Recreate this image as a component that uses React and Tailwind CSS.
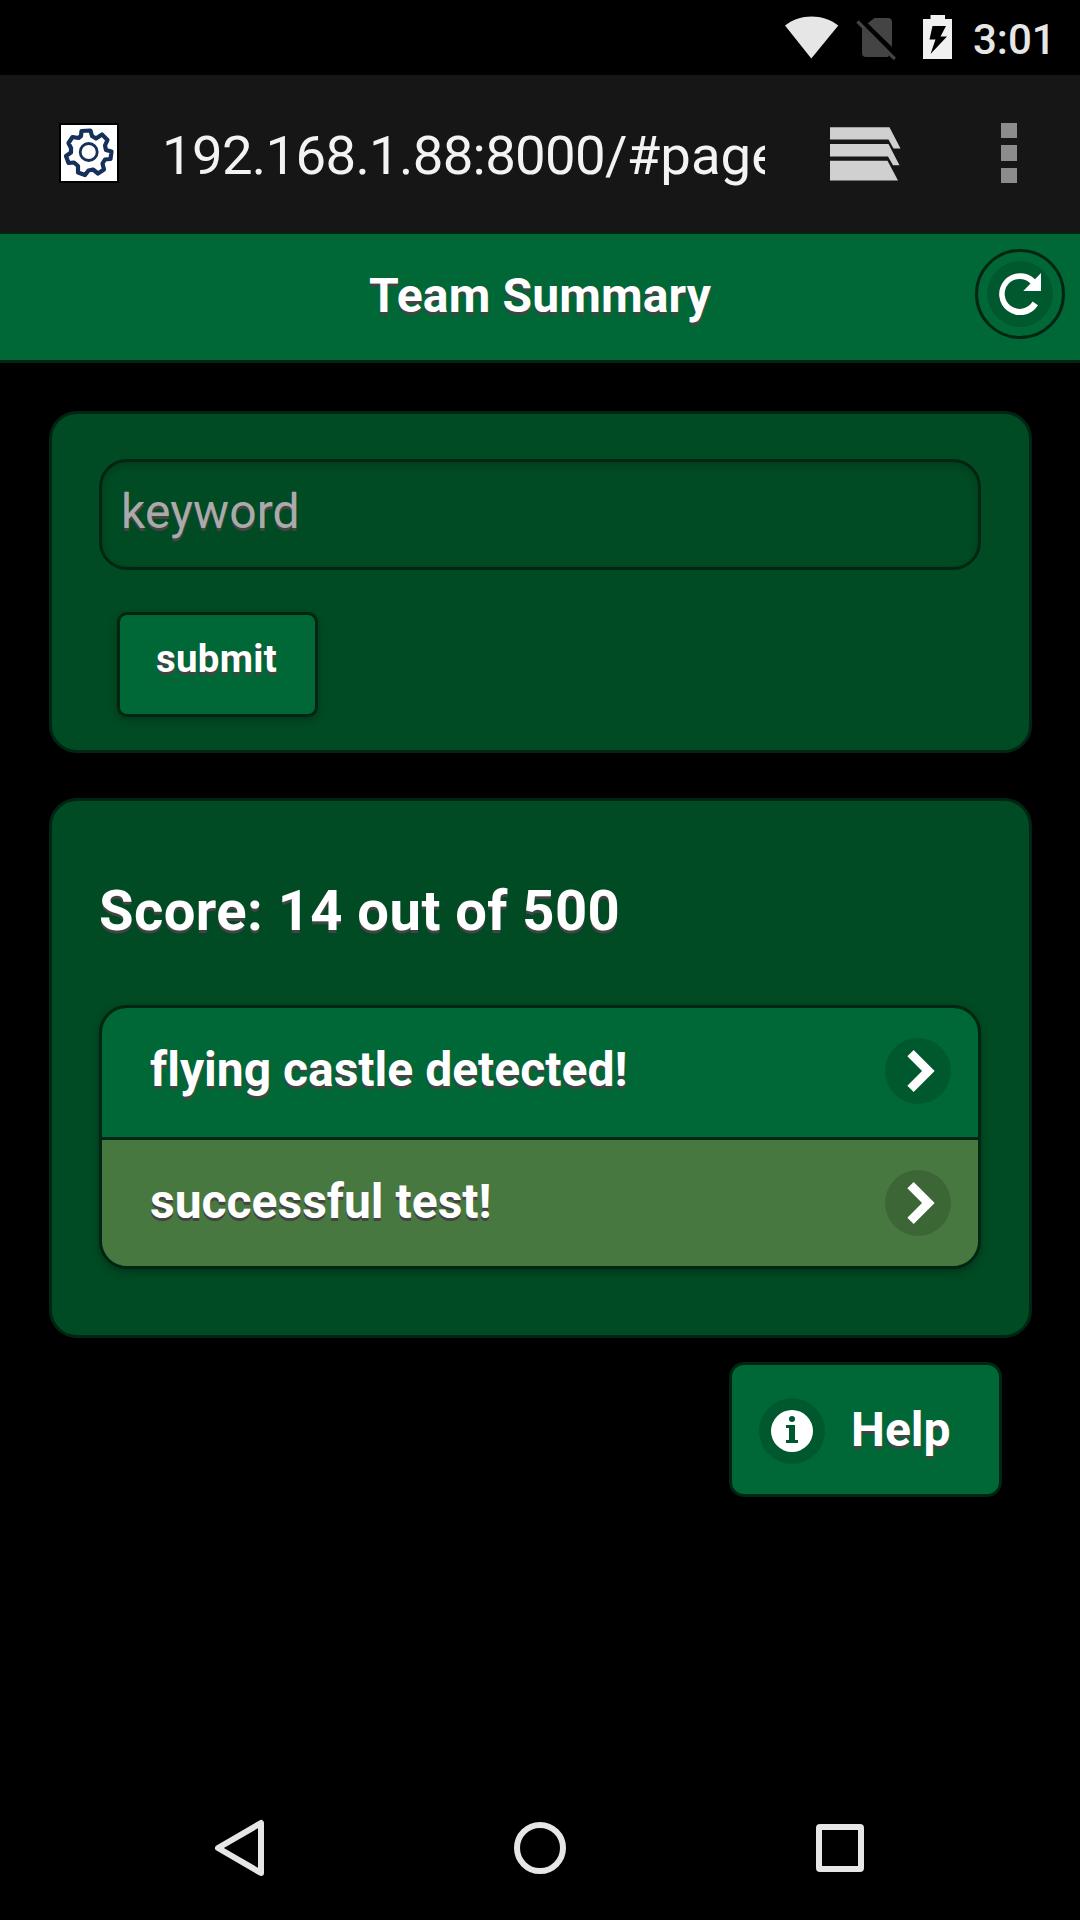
const shadowText = "font-bold text-white [text-shadow:0_3px_0_#444]";

function StatusBar() {
  return (
    <div className="flex h-[75px] shrink-0 justify-end bg-black">
      <svg className="h-[75px] w-[170px]" viewBox="780 0 170 75" overflow="visible">
        <path fill="#e6e6e6" d="M811.3 58.5 785 25.5C800 13.500 823 13.500 838.300 25.500Z" />
        <path fill="#444" d="M874.500 18H888Q892 18 892 22V47L867.700 23.200ZM862 28 889 55 888 57H866Q862 57 862 53Z" />
        <path stroke="#444" strokeWidth="3.200" d="M857.500 21.500 894.800 59" />
        <path fill="#f0f0f0" fillRule="evenodd" d="M930.500 15H945V19H952V59H923V19H930.500ZM932.500 26 929.500 39.500H935.500L930.500 54 947 36.500H940.500L946 26Z" />
      </svg>
      <span className="ml-[23px] mt-[15px] mr-[27px] w-[80px] whitespace-nowrap text-[42px] leading-[49px] text-[#e6e6e6] font-medium">3:01</span>
    </div>
  );
}

function Gear() {
  return (
    <svg className="h-[60px] w-[60px] border-2 border-black bg-white" viewBox="61 125 56 56" fill="none" stroke="#15305a">
      <path strokeWidth="4.200" strokeLinejoin="round" d="M81.500 131 90.500 130.500 92 136 96 138.500 102 134.500 107.500 140 105 145.500 106 150 111.500 151.500 110.500 159 105 159.500 102.500 163.500 104 169.500 98 173.500 93 169.500 88.500 170.500 85 175 78 172.500 78 166 74 162.500 68.500 163 66 156 71 152.500 71 148 68.500 143 72.500 137 78.500 138 81 136Z" />
      <circle cx="88.700" cy="152" r="8.500" strokeWidth="2.800" />
    </svg>
  );
}

function BrowserBar() {
  return (
    <div className="flex h-[157px] shrink-0 items-start bg-[#161616]">
      <div className="ml-[59px] mt-[48px]"><Gear /></div>
      <div className="ml-[43px] mt-[45px] w-[603px] overflow-hidden whitespace-nowrap text-[54.500px] leading-[70px] tracking-[-0.680px] text-[#f3f3f3]">
        192.168.1.88:8000/<span className="tracking-normal">#page</span>
      </div>
      <svg className="ml-[64px] mt-[51px] h-[56px] w-[73px]" viewBox="829 126 73 56" fill="#d0d0d0">
        <path d="M830 127.300H889.500L900.500 148.500H893.500L888.500 139.500H830Z" />
        <path d="M830 144H888.500L899.500 165.200H893L888 156.500H830Z" />
        <path d="M830 160.800H887.500L898 180.500H830Z" />
      </svg>
      <div className="ml-[99px] mt-[47.500px] flex flex-col gap-[7px]">
        <i className="size-[15.500px] bg-[#8c8c8c]" />
        <i className="size-[15.500px] bg-[#8c8c8c]" />
        <i className="size-[15.500px] bg-[#8c8c8c]" />
      </div>
    </div>
  );
}

function Disc({ children }) {
  return (
    <span className="flex size-[66px] shrink-0 items-center justify-center rounded-full bg-black/15">
      <svg className="size-[42px]" viewBox="0 0 14 14" fill="#fff">{children}</svg>
    </span>
  );
}

function ListRow({ label }) {
  return (
    <div className="flex h-[129px] items-start justify-between pl-[48px] pr-[27px] pt-[30px]">
      <span className={`mt-px text-[48px] leading-[62px] ${shadowText}`}>{label}</span>
      <Disc><path d="M5.550 0 3.450 2.100 8.350 7 3.450 11.900 5.550 14 12.550 7Z" /></Disc>
    </div>
  );
}

export default function App() {
  return (
    <div className="flex h-[1920px] w-[1080px] flex-col overflow-hidden bg-black font-['Roboto',sans-serif] [font-variant-ligatures:none]">
      <StatusBar />
      <BrowserBar />
      <header className="grid h-[131px] shrink-0 grid-cols-[1fr_auto_1fr] items-start border-y-[3px] border-t-2 border-[#002613] bg-[#006837]">
        <h1 className={`col-start-2 mt-[31px] text-[48px] leading-[62px] tracking-[0.150px] ${shadowText}`}>Team Summary</h1>
        <button className="mr-[15px] mt-[15px] flex size-[90px] items-center justify-center justify-self-end rounded-full border-[3px] border-[#002613]">
          <Disc>
            <path d="M12 2.100A7 7 0 1 0 13 10.750L11.200 9.500A5 5 0 1 1 10.500 3.500L8.100 6H14V0Z" />
          </Disc>
        </button>
      </header>

      <main className="flex flex-col px-[48.500px] pt-[48px]">
        <section className="flex h-[341.500px] flex-col items-start rounded-[28px] border-[3px] border-[#002613] bg-[#004b23] px-[47.500px] pt-[45px]">
          <div className="h-[111px] w-full rounded-[28px] border-[3px] border-[#002613] px-[19px] pt-[19px] text-[48px] leading-[62px] tracking-[0.100px] text-[#aaa] shadow-[inset_0_3px_9px_rgba(0,0,0,0.2)] [text-shadow:0_3px_0_#444]">keyword</div>
          <button className={`ml-[18px] mt-[42px] h-[105px] w-[201px] rounded-[10px] border-[3px] border-[#002613] bg-[#006837] pb-[12px] pr-[2px] text-[38.400px] tracking-[0.300px] shadow-[0_3px_9px_rgba(0,0,0,0.25)] ${shadowText}`}>submit</button>
        </section>

        <section className="mt-[45.500px] h-[540px] rounded-[28px] border-[3px] border-[#002613] bg-[#004b23] px-[47.500px]">
          <h3 className={`mt-[74px] text-[56.160px] leading-[73px] tracking-[0.430px] ${shadowText}`}>Score: 14 out of 500</h3>
          <div className="mt-[57px] h-[264px] overflow-hidden rounded-[28px] border-[3px] border-[#002613] bg-[#006837] shadow-[0_3px_9px_rgba(0,0,0,0.3)]">
            <ListRow label="flying castle detected!" />
            <div className="border-t-[3px] border-[#002613] bg-[#47783f]">
              <ListRow label="successful test!" />
            </div>
          </div>
        </section>

        <button className="mr-[29.500px] mt-[24px] flex h-[135px] w-[273px] items-start self-end rounded-[15px] border-[3px] border-[#002613] bg-[#006837] pl-[27px] pt-[33px]">
          <Disc>
            <path fillRule="evenodd" d="M7 0A7 7 0 1 0 7 14A7 7 0 1 0 7 0ZM7 2A1 1 0 1 1 7 4A1 1 0 1 1 7 2ZM5 5H8V10H9V11H5V10H6V6H5Z" />
          </Disc>
          <span className={`ml-[26px] mt-px text-[48px] leading-[62px] ${shadowText}`}>Help</span>
        </button>
      </main>

      <nav className="mb-[42px] mt-auto flex justify-center" aria-label="System navigation">
        <svg className="h-[60px] w-[660px]" viewBox="210 1818 660 60" fill="none" stroke="#e6e6e6" strokeWidth="6" strokeLinejoin="round">
          <path d="M261 1823V1873L218 1848Z" />
          <circle cx="540" cy="1848" r="23" />
          <rect x="819" y="1827" width="42" height="42" rx="1" />
        </svg>
      </nav>
    </div>
  );
}
